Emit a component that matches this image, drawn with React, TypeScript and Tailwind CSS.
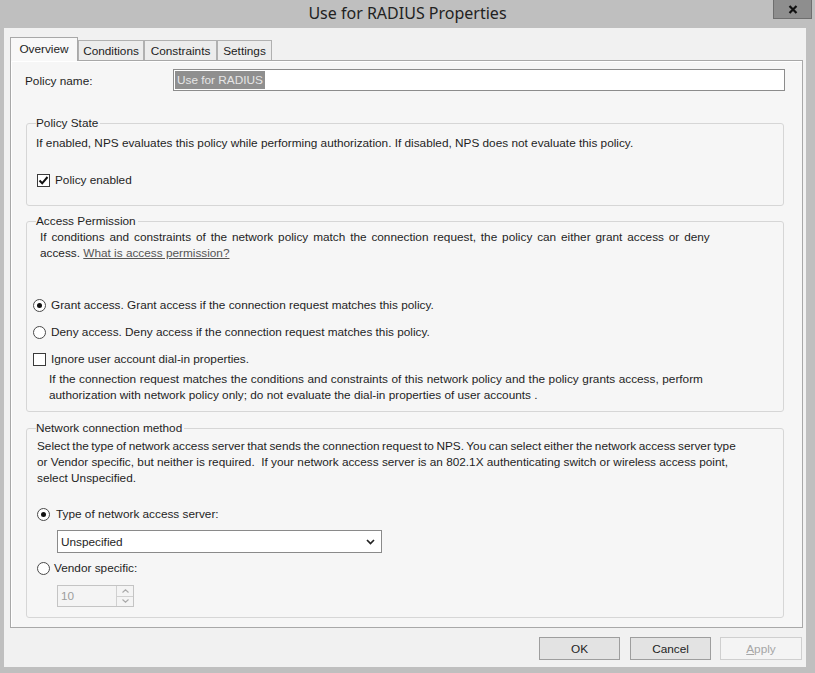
import React from "react";

const FONT = { fontFamily: '"Liberation Sans", Arial, sans-serif' };

function Radio({ checked }: { checked?: boolean }) {
  return (
    <span className="w-[13px] h-[13px] rounded-full border border-[#4a4a4a] bg-white flex items-center justify-center shrink-0">
      {checked && <span className="w-[5px] h-[5px] rounded-full bg-[#111]" />}
    </span>
  );
}

function Check({ checked }: { checked?: boolean }) {
  return (
    <span className="w-[13px] h-[13px] border border-[#3a3a3a] bg-white flex items-center justify-center shrink-0">
      {checked && (
        <svg width="11" height="11" viewBox="0 0 11 11">
          <path d="M1.5 5.5 L4.2 8.3 L9.5 2" stroke="#111" strokeWidth="2" fill="none" />
        </svg>
      )}
    </span>
  );
}

function Tab({ label, w, selected }: { label: string; w: string; selected?: boolean }) {
  if (selected) {
    return (
      <div className={`${w} h-[24px] -mb-px relative z-10 border border-b-0 border-[#a8a8a8] bg-[#f8f8f8] flex items-center justify-center text-[#1c1c1c] pb-[2px]`}>
        {label}
      </div>
    );
  }
  return (
    <div className={`${w} h-[20px] border border-b-0 border-[#b0b0b0] bg-[#ececec] flex items-center justify-center text-[#1c1c1c]`}>
      {label}
    </div>
  );
}

export default function App() {
  return (
    <div
      className="w-[815px] h-[673px] bg-[#bfbfbf] flex flex-col text-[11.8px] leading-[16px] text-[#1e1e1e]"
      style={FONT}
    >
      {/* Title bar */}
      <div className="h-[28px] grid grid-cols-[1fr_auto_1fr] shrink-0">
        <div />
        <div
          className="text-[16px] leading-[26px] text-[#222]"
          style={{ fontFamily: '"Noto Sans", "Open Sans", sans-serif' }}
        >
          Use for RADIUS Properties
        </div>
        <div className="flex justify-end pr-[3px]">
          <div className="w-[39px] h-[19px] bg-[#8e8e8e] border border-[#6e6e6e] border-t-0 flex items-center justify-center">
            <svg width="10" height="9" viewBox="0 0 10 9">
              <path d="M1.5 1 L8.5 8 M8.5 1 L1.5 8" stroke="#111" strokeWidth="2.2" />
            </svg>
          </div>
        </div>
      </div>

      {/* Client area */}
      <div className="flex-1 ml-[4px] mr-[9px] mb-[6px] bg-[#f1f1f1] flex flex-col pl-[6px] pr-[3px] pt-[9px]">
        {/* Tabs */}
        <div className="flex items-end h-[23px]">
          <Tab label="Overview" w="w-[68px]" selected />
          <Tab label="Conditions" w="w-[66px]" />
          <Tab label="Constraints" w="w-[73px]" />
          <Tab label="Settings" w="w-[55px]" />
        </div>

        {/* Panel */}
        <div className="h-[568px] border border-[#a8a8a8] bg-[#f6f6f6] shadow-[inset_1px_1px_0_#ffffff] pt-[8px] pl-[15px] pr-[18px] flex flex-col">
          {/* Policy name */}
          <div className="flex items-center h-[22px] -ml-px">
            <div className="w-[148px] pt-[1px]">Policy name:</div>
            <div className="flex-1 h-[22px] border border-[#8c8c8c] bg-white flex items-center pl-[1px] -mr-px">
              <span className="bg-[#8f8f8f] text-[#e6e6e6] h-[18px] leading-[18px] px-[2px]">Use for RADIUS</span>
            </div>
          </div>

          {/* Policy State */}
          <fieldset className="mt-[24px] border border-[#d6d6d6] rounded-[3px] pl-[9px] pr-[9px] pt-[4px] pb-[17px]">
            <legend className="px-0 pr-[2px]">Policy State</legend>
            <div>
              If enabled, NPS evaluates this policy while performing authorization. If disabled, NPS does not evaluate this policy.
            </div>
            <div className="mt-[21px] ml-[1px] flex items-center gap-[5px] h-[16px]">
              <Check checked />
              <span>Policy enabled</span>
            </div>
          </fieldset>

          {/* Access Permission */}
          <fieldset className="mt-[7px] border border-[#d6d6d6] rounded-[3px] pl-[9px] pr-[9px] pt-0 pb-[8px]">
            <legend className="px-0 pr-[2px]">Access Permission</legend>
            <div className="ml-[4px] whitespace-nowrap">
              <div className="[word-spacing:1.6px]">
                If conditions and constraints of the network policy match the connection request, the policy can either grant access or deny
              </div>
              <div>
                access. <span className="text-[#555] underline">What is access permission?</span>
              </div>
            </div>
            <div className="mt-[36px] -ml-[3px] flex items-center gap-[5px] h-[16px]">
              <Radio checked />
              <span>Grant access. Grant access if the connection request matches this policy.</span>
            </div>
            <div className="mt-[11px] -ml-[3px] flex items-center gap-[5px] h-[16px]">
              <Radio />
              <span>Deny access. Deny access if the connection request matches this policy.</span>
            </div>
            <div className="mt-[11px] -ml-[3px] flex items-center gap-[5px] h-[16px]">
              <Check />
              <span>Ignore user account dial-in properties.</span>
            </div>
            <div className="mt-[5px] ml-[13px] leading-[15.5px] whitespace-nowrap">
              <div className="[word-spacing:0.3px]">
                If the connection request matches the conditions and constraints of this network policy and the policy grants access, perform
              </div>
              <div>
                authorization with network policy only; do not evaluate the dial-in properties of user accounts .
              </div>
            </div>
          </fieldset>

          {/* Network connection method */}
          <fieldset className="mt-[8px] border border-[#d6d6d6] rounded-[3px] pl-[9px] pr-[9px] pt-[2px] pb-[10px]">
            <legend className="px-0 pr-[2px]">Network connection method</legend>
            <div className="ml-[1px] whitespace-nowrap">
              <div className="[word-spacing:-0.7px]">
                Select the type of network access server that sends the connection request to NPS. You can select either the network access server type
              </div>
              <div>
                or Vendor specific, but neither is required.&nbsp; If your network access server is an 802.1X authenticating switch or wireless access point,
              </div>
              <div>select Unspecified.</div>
            </div>
            <div className="mt-[20px] ml-[1px] flex items-center gap-[6px] h-[16px]">
              <Radio checked />
              <span>Type of network access server:</span>
            </div>
            <div className="mt-[8px] ml-[21px] w-[325px] h-[23px] border border-[#8a8a8a] bg-white flex items-center justify-between pl-[3px] pr-[6px]">
              <span>Unspecified</span>
              <svg width="9" height="6" viewBox="0 0 9 6">
                <path d="M1 1 L4.5 4.5 L8 1" stroke="#222" strokeWidth="1.7" fill="none" />
              </svg>
            </div>
            <div className="mt-[7px] ml-[1px] flex items-center gap-[4px] h-[16px]">
              <Radio />
              <span>Vendor specific:</span>
            </div>
            <div className="mt-[9px] ml-[21px] w-[77px] h-[22px] border border-[#c4c4c4] bg-[#f4f4f4] flex">
              <div className="flex-1 pl-[3px] flex items-center text-[#9d9d9d]">10</div>
              <div className="w-[17px] border-l border-[#d0d0d0] flex flex-col">
                <div className="flex-1 flex items-center justify-center border-b border-[#d0d0d0]">
                  <svg width="7" height="4" viewBox="0 0 7 4">
                    <path d="M0.5 3.5 L3.5 0.8 L6.5 3.5" stroke="#a8a8a8" strokeWidth="1.1" fill="none" />
                  </svg>
                </div>
                <div className="flex-1 flex items-center justify-center">
                  <svg width="7" height="4" viewBox="0 0 7 4">
                    <path d="M0.5 0.5 L3.5 3.2 L6.5 0.5" stroke="#a8a8a8" strokeWidth="1.1" fill="none" />
                  </svg>
                </div>
              </div>
            </div>
          </fieldset>
        </div>

        {/* Buttons */}
        <div className="mt-[9px] flex justify-end pr-px">
          <div className="w-[81px] h-[23px] bg-[#e3e3e3] border border-[#9e9e9e] flex items-center justify-center">OK</div>
          <div className="ml-[10px] w-[81px] h-[23px] bg-[#e3e3e3] border border-[#9e9e9e] flex items-center justify-center">Cancel</div>
          <div className="ml-[9px] w-[82px] h-[23px] bg-[#f4f4f4] border border-[#cfcfcf] flex items-center justify-center text-[#a6a6a6]">
            <span><span className="underline">A</span>pply</span>
          </div>
        </div>
      </div>
    </div>
  );
}
